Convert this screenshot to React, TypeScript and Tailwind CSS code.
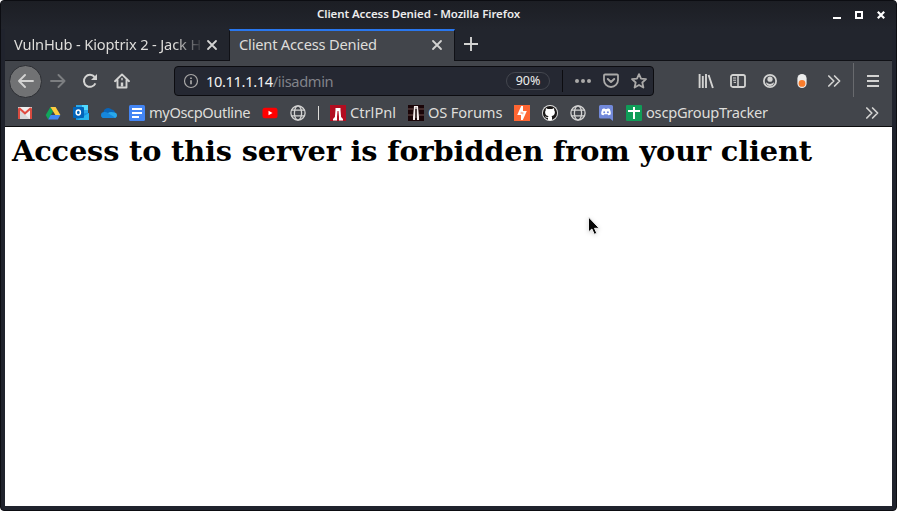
import React from "react";

type IconProps = { children: React.ReactNode; className?: string };

function Icon({ children, className = "" }: IconProps) {
  return (
    <svg viewBox="0 0 16 16" width="16" height="16" fill="none" stroke="#d3d3d2" strokeWidth="2" strokeLinecap="round" strokeLinejoin="round" className={`block shrink-0 ${className}`}>
      {children}
    </svg>
  );
}

function Close({ className = "" }: { className?: string }) {
  return (
    <Icon className={className}>
      <path d="M4 4l8 8M12 4l-8 8" strokeWidth="1.8" />
    </Icon>
  );
}

function Chevrons() {
  return (
    <Icon>
      <path d="M2.8 3l5 5-5 5M8.6 3l5 5-5 5" strokeWidth="1.7" />
    </Icon>
  );
}

function Globe() {
  return (
    <Icon>
      <g strokeWidth="1.3">
        <circle cx="8" cy="8" r="7.1" />
        <ellipse cx="8" cy="8" rx="3.6" ry="7.1" />
        <path d="M1.7 5.2h12.6M1.7 10.8h12.6" />
      </g>
    </Icon>
  );
}

function Slot({ children }: { children: React.ReactNode }) {
  return <div className="flex w-8 shrink-0 items-center justify-center">{children}</div>;
}

function TitleBar() {
  return (
    <div className="flex h-[28px] items-center bg-gradient-to-b from-[#1c1e24] to-[#22252d] pr-[4px]">
      <div className="w-[316px] shrink-0" />
      <div className="-mt-[2px] w-[515px] shrink-0 whitespace-nowrap text-[11.5px] font-semibold leading-[28px] tracking-[-0.09px] text-[#ececec]">
        Client Access Denied - Mozilla Firefox
      </div>
      <svg width="56" height="16" viewBox="0 0 56 16" className="-mt-[2px] shrink-0" shapeRendering="crispEdges">
        <path d="M1 11h8v2H1z" fill="#fff" />
        <path d="M24 6h6v6h-6z" fill="none" stroke="#fff" strokeWidth="2" />
        <path d="M45.8 5.8l6.4 6.4M52.2 5.8l-6.4 6.4" stroke="#fff" strokeWidth="2.2" shapeRendering="auto" />
      </svg>
    </div>
  );
}

function TabStrip() {
  return (
    <div className="flex h-[32px] border-b border-[#101116] bg-[#22252d] text-[14.67px]">
      <div className="flex w-[224px] shrink-0 items-center pl-[9px]">
        <div className="w-[188px] whitespace-nowrap leading-[31px] tracking-[-0.16px] text-[#deddda] [mask-image:linear-gradient(to_right,black_160px,transparent_190px)]">
          VulnHub - Kioptrix 2 - Jack H
        </div>
        <Close className="ml-[2px]" />
      </div>
      <div className="-mb-px flex w-[226px] shrink-0 border-x border-t-2 border-x-[#101116] border-t-[#2977ee] bg-[#42454b] pl-[9px]">
        <div className="w-[190px] whitespace-nowrap leading-[27px] tracking-[-0.2px] text-[#deddda]">Client Access Denied</div>
        <Close className="mt-[6px]" />
      </div>
      <Icon className="ml-[8px] mt-[7px]">
        <path d="M8 1v14M1 8h14" strokeWidth="1.9" strokeLinecap="butt" />
      </Icon>
    </div>
  );
}

function AddressBar() {
  return (
    <div className="flex h-[30px] w-[480px] shrink-0 items-center rounded-[4px] border border-[#0c0c10] bg-[#252832] pl-[8px]">
      <svg width="16" height="16" viewBox="0 0 16 16" fill="none" stroke="#aaa9a8" className="shrink-0">
        <circle cx="8" cy="8" r="6.5" strokeWidth="1.2" />
        <path d="M8 7.2v4M8 4.4v1.5" strokeWidth="1.7" />
      </svg>
      <div className="ml-[7px] w-[300px] whitespace-nowrap text-[14.67px] leading-[28px] tracking-[-0.37px] text-[#818389]">
        <span className="text-[#f2f2f2]">10.11.1.14</span>/iisadmin
      </div>
      <div className="flex h-[18px] w-[44px] shrink-0 items-center justify-center rounded-full border border-[#44474f] text-[12.5px] tracking-[-0.1px] text-[#eeeeec]">90%</div>
      <div className="ml-[12px] h-[22px] w-px shrink-0 bg-[#0c0c10]" />
      <svg width="16" height="16" viewBox="0 0 16 16" fill="#aaa9a8" className="ml-[12px] shrink-0">
        <circle cx="2" cy="8" r="2" />
        <circle cx="8" cy="8" r="2" />
        <circle cx="14" cy="8" r="2" />
      </svg>
      <svg width="16" height="16" viewBox="0 0 16 16" fill="none" stroke="#aaa9a8" strokeWidth="1.8" strokeLinecap="round" strokeLinejoin="round" className="ml-[12px] shrink-0">
        <path d="M2 1.5h12q1 0 1 1V7a7 7 0 01-14 0V2.5q0-1 1-1z" />
        <path d="M4.8 6L8 9l3.2-3" strokeWidth="2" />
      </svg>
      <svg width="16" height="16" viewBox="0 0 16 16" fill="none" stroke="#aaa9a8" strokeWidth="1.8" strokeLinejoin="round" className="ml-[12px] shrink-0">
        <path d="M8 1.1l2 4.5 5 .5-3.7 3.4 1.1 5L8 12l-4.4 2.5 1.1-5L1 6.1l5-.5z" />
      </svg>
    </div>
  );
}

function NavBar() {
  return (
    <div className="flex h-[38px] items-center bg-[#42454b] pl-[4px]">
      <div className="mt-[2px] flex h-[33px] w-[33px] shrink-0 items-center justify-center rounded-full border border-[#2c2e33] bg-[#717274]">
        <Icon>
          <path d="M15 8H1M7 2L1 8l6 6" strokeWidth="1.9" />
        </Icon>
      </div>
      <div className="mt-[2px] flex w-[132px] shrink-0">
        <Slot>
          <Icon className="opacity-40">
            <path d="M1 8h13.5M8.5 2l6 6-6 6" strokeWidth="1.9" />
          </Icon>
        </Slot>
        <Slot>
          <Icon>
            <path d="M13.4 10.4A6 6 0 1 1 12.6 4" strokeLinecap="butt" />
            <path d="M15 1v6H9z" fill="#d3d3d2" stroke="none" />
          </Icon>
        </Slot>
        <Slot>
          <Icon>
            <path d="M1 8.2L8 1.4l7 6.8M3.5 7v7.5h9V7" strokeWidth="1.9" />
            <path d="M8 13.5v-4" strokeWidth="2.4" strokeLinecap="butt" />
            <path d="M8 5.5v1.3" strokeWidth="1.4" />
          </Icon>
        </Slot>
      </div>
      <div className="mt-[2px]"><AddressBar /></div>
      <div className="ml-[36px] mt-[2px] flex w-[160px] shrink-0">
        <Slot>
          <Icon>
            <path d="M1.6 1v14M4.8 3v12M8 1v14M10.6 2l4.3 13" strokeWidth="1.9" strokeLinecap="butt" />
          </Icon>
        </Slot>
        <Slot>
          <Icon>
            <rect x="1" y="2" width="14" height="12" rx="1.8" strokeWidth="1.8" />
            <path d="M8 2v12" strokeWidth="1.5" />
            <path d="M3 5h3M3 7.2h3M3.7 9.4H6" strokeWidth="1" strokeLinecap="butt" />
          </Icon>
        </Slot>
        <Slot>
          <Icon>
            <circle cx="8" cy="8" r="6.1" strokeWidth="1.8" />
            <circle cx="8" cy="6.2" r="2.6" fill="#d3d3d2" stroke="none" />
            <path d="M4 9.2q4 3.5 8 0c0 2.2-1.8 3.9-4 3.9S4 11.4 4 9.2z" fill="#d3d3d2" stroke="none" />
          </Icon>
        </Slot>
        <Slot>
          <svg width="16" height="16" viewBox="0 0 16 16">
            <rect x="3.4" y="1" width="9.2" height="14" rx="4.6" fill="#ededed" />
            <circle cx="8" cy="10.4" r="3.4" fill="#f97c2b" />
          </svg>
        </Slot>
        <Slot><Chevrons /></Slot>
      </div>
      <div className="ml-[3px] h-[34px] w-px shrink-0 bg-[#686a6e]" />
      <Icon className="ml-[11px] mt-[2px]">
        <path d="M2 3h12M2 8h12M2 13h12" strokeWidth="2" strokeLinecap="butt" />
      </Icon>
    </div>
  );
}

function Lighthouse({ bg, dark = false }: { bg: string; dark?: boolean }) {
  return (
    <svg width="16" height="16" viewBox="0 0 16 16" className="shrink-0">
      <path d="M0 0h16v16H0z" fill={bg} />
      {dark && <path d="M0 4h5M0 10h5M11 4h5M11 10h5" stroke="#452b2b" strokeWidth="2" />}
      {dark ? (
        <>
          <path d="M6 1h4l1 11v3H9V4H7v11H5v-3z" fill="#f5eded" />
          <path d="M8 2v11" stroke="#77706f" />
        </>
      ) : (
        <path d="M5.5 3h5v2l.6 7 1.9 2v1.5H9V12L8.5 6h-1L7 12v3.5H3V14l1.9-2 .6-7z" fill="#fff" />
      )}
    </svg>
  );
}

function Label({ children, className }: { children: string; className: string }) {
  return <div className={`-mt-[2px] ml-[4px] shrink-0 whitespace-nowrap text-[14.67px] leading-[20px] text-[#deddda] ${className}`}>{children}</div>;
}

function Group({ children }: { children: React.ReactNode }) {
  return <div className="flex shrink-0 items-center">{children}</div>;
}

function Bookmarks() {
  return (
    <div className="flex h-[28px] items-center border-b border-[#0c0c0d] bg-[#42454b] pl-[12px]">
      <div className="flex flex-1 items-center gap-[12px]">
        <svg width="16" height="16" viewBox="0 0 16 16" className="shrink-0">
          <rect x="1" y="2" width="14" height="12" rx="1" fill="#efefef" />
          <path d="M3 5l10 9H3z" fill="#d8d8d8" />
          <path d="M1 14V3l2 1v10zM15 14V3l-2 1v10z" fill="#d84b40" />
          <path d="M2 3l6 5.3L14 3" fill="none" stroke="#df4c41" strokeWidth="2" />
        </svg>
        <svg width="16" height="16" viewBox="0 0 16 16" className="shrink-0">
          <path d="M5.4 2L8 6.5 3.2 14.5.7 10z" fill="#10a65b" />
          <path d="M5.4 2h5.2l4.8 8h-5z" fill="#ffcd40" />
          <path d="M5.7 10h9.7l-2.6 4.5H3.2z" fill="#4387f4" />
        </svg>
        <svg width="16" height="16" viewBox="0 0 16 16" className="shrink-0">
          <path d="M3 0h12v9H3z" fill="#28a8ea" />
          <path d="M9 0h6v5H9z" fill="#50d9ff" />
          <path d="M3 9l13-1v7H3z" fill="#1490df" />
          <path d="M4 15l12-7v7z" fill="#28b6ee" />
          <rect x="0" y="2" width="11" height="11" rx="1" fill="#0364b8" />
          <ellipse cx="5.3" cy="7.5" rx="2.1" ry="2.4" fill="none" stroke="#fff" strokeWidth="1.5" />
        </svg>
        <svg width="16" height="16" viewBox="0 0 16 16" className="shrink-0">
          <path d="M2.5 7.5a4.7 4.7 0 018.2-2.9 4 4 0 013.3 4l-6 3-6-2z" fill="#0a65b8" />
          <path d="M7 8q2-1.6 5-.8 4 .2 4 3 0 2.8-3 2.8H6z" fill="#28a8ea" />
          <path d="M0 10.2Q0 7 3.5 7q2.5-.2 4.5 1.8l6 3.7-1 .5H3q-3 0-3-2.8z" fill="#1687dc" />
        </svg>
        <Group>
          <svg width="16" height="16" viewBox="0 0 16 16" className="shrink-0">
            <rect width="16" height="16" rx="1.5" fill="#4385f4" />
            <path d="M3 4h10M3 8h10M3 12h7" stroke="#fff" strokeWidth="2" />
          </svg>
          <Label className="w-[101px] tracking-[-0.4px]">myOscpOutline</Label>
        </Group>
        <svg width="16" height="16" viewBox="0 0 16 16" className="shrink-0">
          <rect x="0.5" y="2.7" width="15" height="10.6" rx="2.5" fill="#f00" />
          <path d="M6.5 5.7v4.6l4-2.3z" fill="#fff" />
        </svg>
        <Globe />
        <div className="flex items-center">
          <div className="mr-[11px] h-[14px] w-px bg-[#deddda]" />
          <Lighthouse bg="#b20d20" />
          <Label className="w-[46px]">CtrlPnl</Label>
        </div>
        <Group>
          <Lighthouse bg="#1a0508" dark />
          <Label className="w-[74px] tracking-[-0.15px]">OS Forums</Label>
        </Group>
        <svg width="16" height="16" viewBox="0 0 16 16" className="shrink-0">
          <path d="M0 0h16v16H0z" fill="#ff6633" />
          <path d="M7.2 1H9v5h3.8L8.8 15H7v-5H3.2z" fill="#fff" />
          <path d="M7.2 6.8v2.1M8.8 7.2v2.1" stroke="#ff6633" strokeWidth=".7" />
        </svg>
        <svg width="16" height="16" viewBox="0 0 16 16" className="shrink-0">
          <circle cx="8" cy="8" r="8" fill="#e4e4e3" />
          <circle cx="8" cy="8" r="7.1" fill="#191717" />
          <path d="M6 15v-2.1c-2 .4-2.3-.9-3-1.4 1.4-.2 1.6 1.1 3 .7.1-.6.3-.9.6-1.2-2.3-.3-3.5-1.5-3.5-3.8 0-.9.3-1.5.7-2-.2-.7-.1-1.4.1-2 1 0 1.7.6 2 .9 1.4-.3 2.8-.3 4.1 0 .4-.3 1.1-.9 2-.9.3.7.3 1.4.1 2 .5.5.8 1.1.8 2 0 2.3-1.3 3.5-3.5 3.8.4.4.6.8.6 1.4V15q-2 .7-4 0z" fill="#fff" />
        </svg>
        <Globe />
        <svg width="16" height="16" viewBox="0 0 16 16" className="shrink-0">
          <path d="M2.5 0h11Q15 0 15 1.5V16l-3-2.5H2.5Q1 13.5 1 12V1.5Q1 0 2.5 0z" fill="#7289da" />
          <path d="M4.3 4.1l2-.8.6.7h2.3l.6-.7 2 .8q1.1 2.6 1 5.2-1.2 1-2.4 1l-.8-1.1H6.3l-.8 1.1q-1.2 0-2.3-1 0-2.8 1.1-5.2z" fill="#fff" />
          <circle cx="6.2" cy="7.3" r="1" fill="#7289da" />
          <circle cx="9.9" cy="7.3" r="1" fill="#7289da" />
        </svg>
        <Group>
          <svg width="16" height="16" viewBox="0 0 16 16" className="shrink-0">
            <rect width="16" height="16" rx="1" fill="#0f9d58" />
            <path d="M8 2v12M2 6h12" stroke="#fff" strokeWidth="2" />
          </svg>
          <Label className="w-[122px] tracking-[-0.25px]">oscpGroupTracker</Label>
        </Group>
      </div>
      <div className="mr-[12px]"><Chevrons /></div>
    </div>
  );
}

export default function App() {
  return (
    <div className="h-[511px] w-[897px] overflow-hidden bg-white">
      <div className="relative flex h-[511px] w-[897px] flex-col overflow-hidden rounded-[4px] border border-[#0c0d12] bg-[#20232d] font-['Noto_Sans',sans-serif]">
        <TitleBar />
        <div className="mx-[4px] mb-[4px] flex flex-1 flex-col">
          <TabStrip />
          <NavBar />
          <Bookmarks />
          <main className="flex-1 bg-white pl-[7px] pt-[7px]">
            <h1 className="whitespace-nowrap font-['DejaVu_Serif',serif] text-[28.8px] font-bold leading-[34px] tracking-[-0.16px] text-black">
              Access to this server is forbidden from your client
            </h1>
          </main>
        </div>
        <svg width="14" height="21" viewBox="0 0 14 21" className="absolute left-[586px] top-[215px] drop-shadow-sm">
          <path d="M1.5 1v15l3.4-3 2.4 5.3 2.5-1-2.3-5h4.7z" fill="#050505" stroke="#eee" />
        </svg>
      </div>
    </div>
  );
}
